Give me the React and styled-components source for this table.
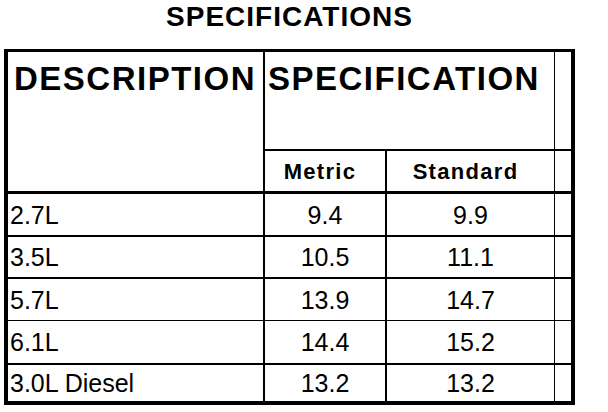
import React from 'react';
import styled, { createGlobalStyle } from 'styled-components';

const GlobalStyle = createGlobalStyle`
    html, body {
        margin: 0;
        background: #fff;
    }

    body {
        font-family: 'Liberation Sans', Arial, Helvetica, sans-serif;
        color: #000;
    }
`;

// each row: height in px (border included) and the thickness of the rule under it
const rows = [
    { name: '2.7L', metric: '9.4', standard: '9.9', height: 43, rule: 2 },
    { name: '3.5L', metric: '10.5', standard: '11.1', height: 42, rule: 2 },
    { name: '5.7L', metric: '13.9', standard: '14.7', height: 42, rule: 1 },
    { name: '6.1L', metric: '14.4', standard: '15.2', height: 44, rule: 2 },
    { name: '3.0L Diesel', metric: '13.2', standard: '13.2', height: 36, rule: 0 }
];

const App = () => {
    return (
        <>
            <GlobalStyle />
            <Page>
                <Title>SPECIFICATIONS</Title>
                <SpecTable>
                    <colgroup>
                        <col style={{ width: 257 }} />
                        <col style={{ width: 122 }} />
                        <col style={{ width: 168 }} />
                        <col style={{ width: 16 }} />
                    </colgroup>
                    <tbody>
                        <tr>
                            <BigHead rowSpan={2} $right={2} $bottom={3} $pad={6}>DESCRIPTION</BigHead>
                            <BigHead colSpan={2} $right={1} $bottom={2} $h={99} $pad={3}>SPECIFICATION</BigHead>
                            <Cell $bottom={2} $h={99} />
                        </tr>
                        <tr>
                            <SubHead $right={2} $bottom={3} $h={43}>Metric</SubHead>
                            <SubHead $right={1} $bottom={3} $h={43}>Standard</SubHead>
                            <Cell $bottom={3} $h={43} />
                        </tr>
                        {rows.map((row) => (
                            <tr key={row.name}>
                                <Cell $right={2} $bottom={row.rule} $h={row.height} $pad={2}>{row.name}</Cell>
                                <Cell $right={2} $bottom={row.rule} $h={row.height} $center>{row.metric}</Cell>
                                <Cell $right={1} $bottom={row.rule} $h={row.height} $center>{row.standard}</Cell>
                                <Cell $bottom={row.rule} $h={row.height} />
                            </tr>
                        ))}
                    </tbody>
                </SpecTable>
            </Page>
        </>
    );
};

const Page = styled.div`
    width: 608px;
    height: 412px;
    overflow: hidden;
`;

const Title = styled.h1`
    box-sizing: border-box;
    width: 571px;
    height: 49px;
    margin: 0 0 0 4px;
    padding-top: 1px;
    font-size: 28px;
    line-height: 32px;
    font-weight: 700;
    letter-spacing: 1px;
    text-align: center;
`;

const SpecTable = styled.table`
    box-sizing: border-box;
    width: 571px;
    margin-left: 4px;
    table-layout: fixed;
    border-collapse: separate;
    border-spacing: 0;
    border-style: solid;
    border-color: #000;
    border-width: 3px 4px 4px 4px;
`;

const Cell = styled.td`
    box-sizing: border-box;
    height: ${(p) => (p.$h ? `${p.$h}px` : 'auto')};
    padding: 0 0 0 ${(p) => p.$pad || 0}px;
    border-style: solid;
    border-color: #000;
    border-width: 0 ${(p) => p.$right || 0}px ${(p) => p.$bottom || 0}px 0;
    font-size: 25px;
    line-height: 28px;
    font-weight: 400;
    text-align: ${(p) => (p.$center ? 'center' : 'left')};
    vertical-align: middle;
    white-space: nowrap;
`;

const BigHead = styled(Cell)`
    padding-top: 8px;
    font-size: 33px;
    line-height: 38px;
    font-weight: 700;
    letter-spacing: 1.5px;
    vertical-align: top;
`;

const SubHead = styled(Cell)`
    padding-right: 10px;
    font-size: 22px;
    line-height: 25px;
    font-weight: 700;
    letter-spacing: 1.3px;
    text-align: center;
`;

export default App;
